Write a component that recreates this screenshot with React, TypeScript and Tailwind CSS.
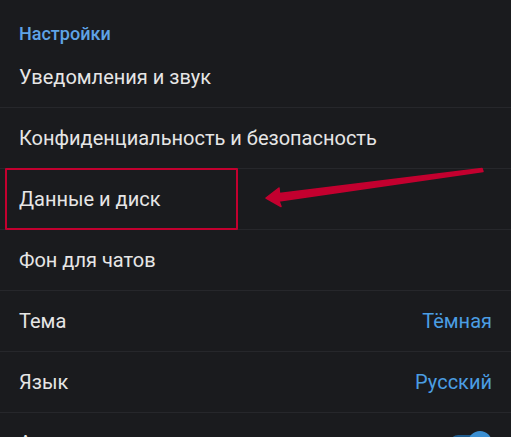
const rows: { label: string; value?: string; toggle?: boolean }[] = [
    { label: 'Уведомления и звук' },
    { label: 'Конфиденциальность и безопасность' },
    { label: 'Данные и диск' },
    { label: 'Фон для чатов' },
    { label: 'Тема', value: 'Тёмная' },
    { label: 'Язык', value: 'Русский' },
    { label: 'Анимации', toggle: true },
];

export default function App() {
    return (
        <div className="relative w-[511px] h-[437px] overflow-hidden bg-[#1a1b1e] font-['Roboto',sans-serif]">
            <div className="h-[47px] px-[19px] pt-[23px] text-[18px] leading-[22px] font-medium text-[#5fa3e6]">Настройки</div>

            {rows.map((row) => (
                <div key={row.label} className="flex items-center justify-between h-[61px] px-[19px] border-b border-[#26272b]">
                    <span className="text-[20px] text-[#e6e6e6]">{row.label}</span>
                    {row.value && <span className="text-[20px] text-[#4b9ee3]">{row.value}</span>}
                    {row.toggle && (
                        <div className="relative w-[40px] h-[16px] mr-[2px] rounded-full bg-[#1e5a8c]">
                            <div className="absolute -right-[2px] -top-[4px] w-[24px] h-[24px] rounded-full bg-[#3b8fd2]" />
                        </div>
                    )}
                </div>
            ))}

            <div className="absolute left-[5px] top-[168px] w-[233px] h-[62px] border-[2px] border-[#c3002f] rounded-[1px]" />

            <svg className="absolute left-0 top-0" width="511" height="437">
                <path d="M482 168.5 L483 171.5 L279 201 L281 206.5 L266 198 L279 188 L279.5 193.5 Z" fill="#c3002f" stroke="#c3002f" strokeWidth="1.5" strokeLinejoin="round" />
            </svg>
        </div>
    )
}
